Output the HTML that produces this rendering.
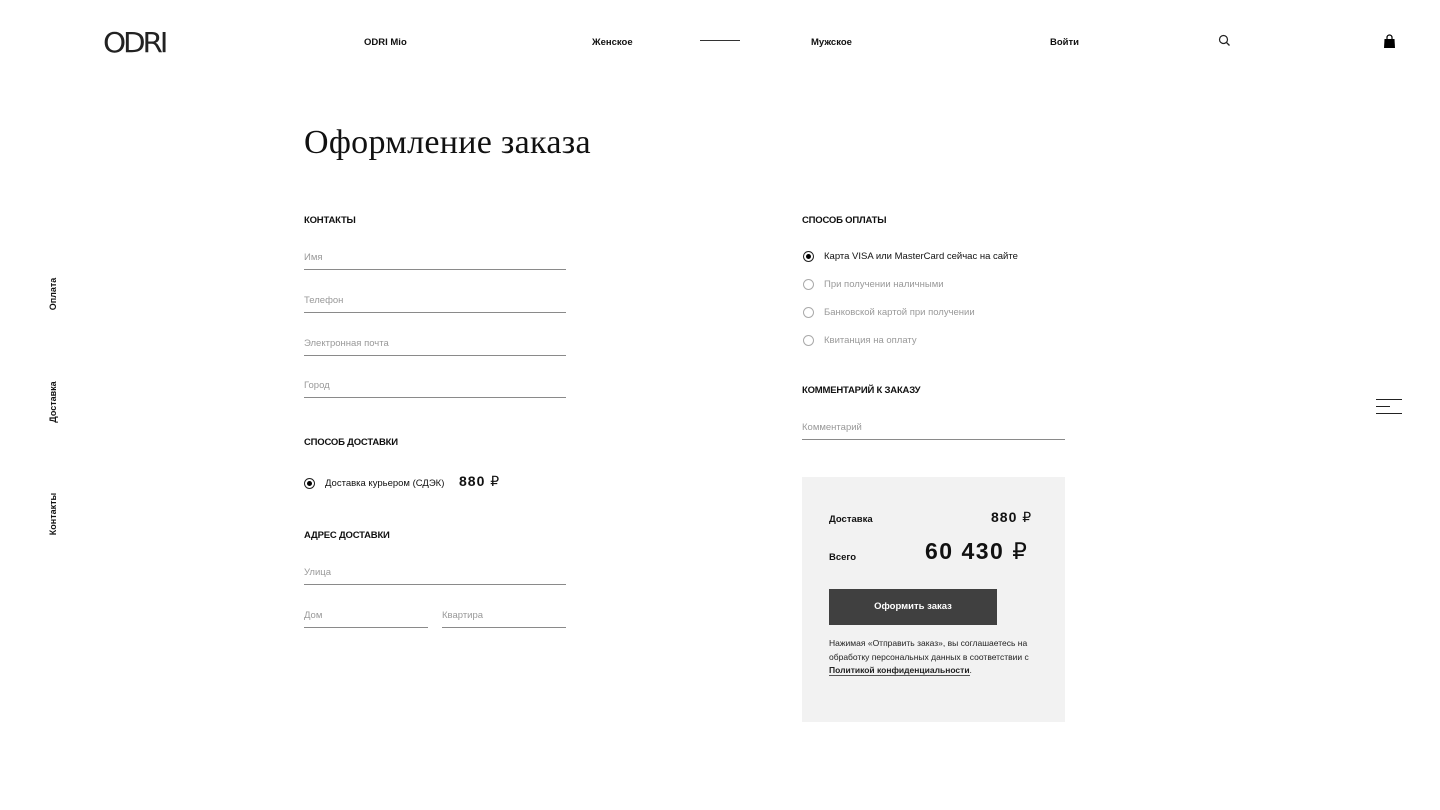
<!DOCTYPE html>
<html><head><meta charset="utf-8"><style>
*{margin:0;padding:0;box-sizing:border-box}
body{width:1440px;height:810px;background:#fff;font-family:"Liberation Sans",sans-serif;color:#111;position:relative;overflow:hidden}
.a{position:absolute;white-space:nowrap}
.nav{font-size:9.5px;font-weight:bold;top:37px}
.h{font-size:9.5px;font-weight:bold;letter-spacing:-0.2px}
.f{position:absolute;border-bottom:1px solid #8a8a8a;font-size:9.5px;color:#999;height:20px}
.f span{position:absolute;left:0;top:2px}
.r{position:absolute;width:11px;height:11px;border:1px solid #aaa;border-radius:50%}
.r.on{border-color:#222}
.r.on::after{content:"";position:absolute;left:2px;top:2px;width:5px;height:5px;border-radius:50%;background:#000}
.rl{font-size:9.5px;color:#999}
.v{position:absolute;transform:rotate(-90deg);font-size:9px;font-weight:bold;white-space:nowrap;transform-origin:center}
</style></head><body>
<div class="a" style="left:103px;top:27px;font-size:28px;letter-spacing:-3px;color:#222;font-family:'DejaVu Sans',sans-serif;line-height:32px;transform:scaleX(1.05);transform-origin:left">ODRI</div>
<div class="a nav" style="left:364px">ODRI Mio</div>
<div class="a nav" style="left:592px">Женское</div>
<div class="a" style="left:700px;top:40px;width:40px;border-top:1px solid #333"></div>
<div class="a nav" style="left:811px">Мужское</div>
<div class="a nav" style="left:1050px">Войти</div>
<svg class="a" style="left:1218px;top:34px" width="13" height="13" viewBox="0 0 13 13"><circle cx="5.5" cy="5.5" r="4" fill="none" stroke="#222" stroke-width="1.2"/><path d="M8.5 8.5L11.5 11.5" stroke="#222" stroke-width="1.3"/></svg>
<svg class="a" style="left:1383px;top:34px" width="13" height="15" viewBox="0 0 13 15"><path d="M4 5V3.5a2.5 2.5 0 0 1 5 0V5" fill="none" stroke="#000" stroke-width="1.2"/><path d="M1.5 5h10l.5 9H1z" fill="#000"/></svg>

<div class="a" style="left:304px;top:124px;font-family:'Liberation Serif',serif;font-size:34px;letter-spacing:0.3px;color:#111">Оформление заказа</div>

<div class="a h" style="left:304px;top:215px">КОНТАКТЫ</div>
<div class="f" style="left:304px;top:250px;width:262px"><span>Имя</span></div>
<div class="f" style="left:304px;top:293px;width:262px"><span>Телефон</span></div>
<div class="f" style="left:304px;top:336px;width:262px"><span>Электронная почта</span></div>
<div class="f" style="left:304px;top:378px;width:262px"><span>Город</span></div>
<div class="a h" style="left:304px;top:437px">СПОСОБ ДОСТАВКИ</div>
<div class="r on" style="left:304px;top:478px"></div>
<div class="a" style="left:325px;top:478px;font-size:9.5px">Доставка курьером (СДЭК)</div>
<div class="a" style="left:459px;top:473px;font-size:14px;font-weight:bold;letter-spacing:1px">880 <span style="font-weight:normal">₽</span></div>
<div class="a h" style="left:304px;top:530px">АДРЕС ДОСТАВКИ</div>
<div class="f" style="left:304px;top:565px;width:262px"><span>Улица</span></div>
<div class="f" style="left:304px;top:608px;width:124px"><span>Дом</span></div>
<div class="f" style="left:442px;top:608px;width:124px"><span>Квартира</span></div>

<div class="a h" style="left:802px;top:215px">СПОСОБ ОПЛАТЫ</div>
<div class="r on" style="left:803px;top:251px"></div>
<div class="a" style="left:824px;top:251px;font-size:9.5px">Карта VISA или MasterCard сейчас на сайте</div>
<div class="r" style="left:803px;top:279px"></div>
<div class="a rl" style="left:824px;top:279px">При получении наличными</div>
<div class="r" style="left:803px;top:307px"></div>
<div class="a rl" style="left:824px;top:307px">Банковской картой при получении</div>
<div class="r" style="left:803px;top:335px"></div>
<div class="a rl" style="left:824px;top:335px">Квитанция на оплату</div>
<div class="a h" style="left:802px;top:385px">КОММЕНТАРИЙ К ЗАКАЗУ</div>
<div class="f" style="left:802px;top:420px;width:263px"><span>Комментарий</span></div>

<div class="a" style="left:802px;top:477px;width:263px;height:245px;background:#f2f2f2"></div>
<div class="a" style="left:829px;top:514px;font-size:9.5px;font-weight:bold">Доставка</div>
<div class="a" style="left:991px;top:509px;font-size:14px;font-weight:bold;letter-spacing:1px">880 <span style="font-weight:normal">₽</span></div>
<div class="a" style="left:829px;top:552px;font-size:9.5px;font-weight:bold">Всего</div>
<div class="a" style="left:925px;top:538px;font-size:23px;font-weight:bold;letter-spacing:1.5px">60 430 <span style="font-weight:normal">₽</span></div>
<div class="a" style="left:829px;top:589px;width:168px;height:36px;background:#404040;color:#fff;font-size:9.5px;font-weight:bold;text-align:center;line-height:36px">Оформить заказ</div>
<div class="a" style="left:829px;top:637px;font-size:8.5px;line-height:13.5px;color:#222">Нажимая «Отправить заказ», вы соглашаетесь на<br>обработку персональных данных в соответствии с<br><b style="border-bottom:1px solid #555">Политикой конфиденциальности</b>.</div>

<div class="v" style="left:23px;top:289px;width:60px;text-align:center">Оплата</div>
<div class="v" style="left:23px;top:397px;width:60px;text-align:center">Доставка</div>
<div class="v" style="left:23px;top:509px;width:60px;text-align:center">Контакты</div>

<div class="a" style="left:1376px;top:399px;width:26px;border-top:1px solid #222"></div>
<div class="a" style="left:1376px;top:406px;width:14px;border-top:1px solid #222"></div>
<div class="a" style="left:1376px;top:413px;width:26px;border-top:1px solid #222"></div>
</body></html>
